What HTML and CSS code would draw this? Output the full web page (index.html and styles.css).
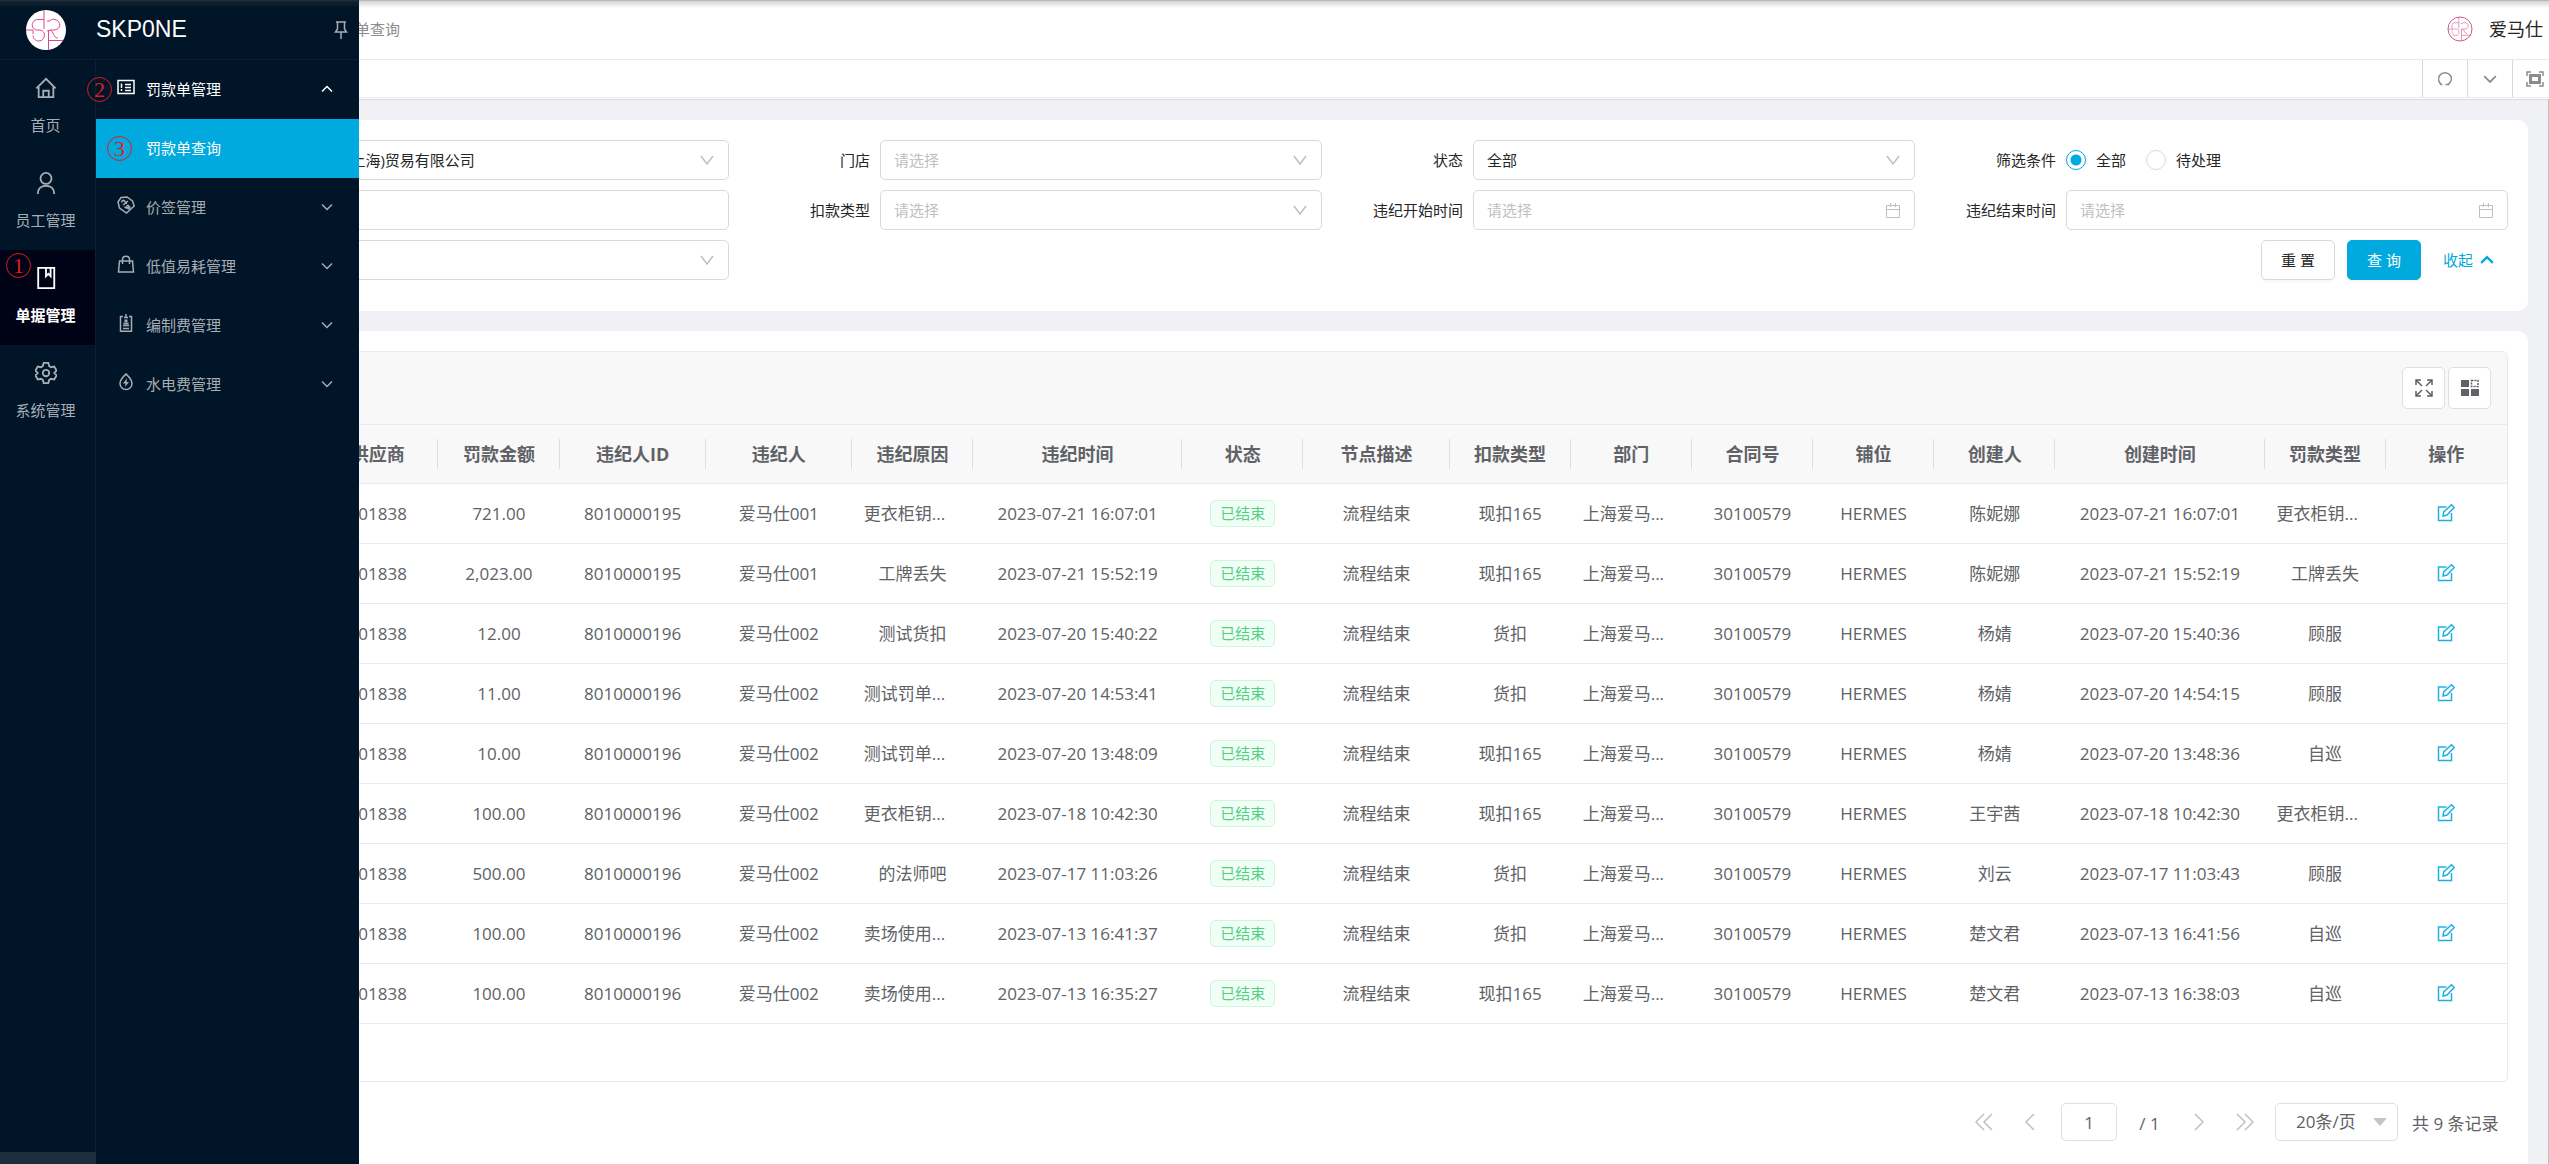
FILE: index.html
```html
<!DOCTYPE html>
<html lang="zh-CN">
  <head>
    <meta charset="UTF-8" />
    <meta name="viewport" content="width=device-width, initial-scale=1.0" />
    <title>罚款单查询</title>
    <link rel="stylesheet" href="styles.css">
  </head>
  <body>
    <!-- 公用图标 -->
    <svg class="sprite" aria-hidden="true">
      <symbol id="logo" viewBox="0 0 40 40">
        <path d="M18 0v19M18 9.500h-6c-7 0-8 10-1 10.500h3c7 1 5 11-1 11-4 0-6-3-6-5.500M0 20h7v4M21 11h3c1-2 3-2 5-1.500 7 1.500 6 10.500-1 10.500h-3l-4 1M22.500 20v20M22.500 30.500H38M24 20c4 1 3 8 8 8" />
      </symbol>
      <symbol id="edit" viewBox="0 0 18 18">
        <path d="M9.500 3H1.500v13.500H14.500V9M6 12l.700-4L14.500.800l2.700 2.700L10 11z" />
      </symbol>
      <symbol id="down" viewBox="0 0 12 12">
        <path d="M1 3.500 6 8.500l5-5" />
      </symbol>
      <symbol id="up" viewBox="0 0 12 12">
        <path d="M1 8.500 6 3.500l5 5" />
      </symbol>
    </svg>

    <!-- 侧边菜单，展开时盖在内容上 -->
    <aside class="sidebar">
      <div class="brand">
        <svg class="brand-logo"><use href="#logo" /></svg>
        <h1 class="brand-name">SKP0NE</h1>
        <button class="pin" type="button" aria-label="固定菜单">
          <svg width="14" height="18" viewBox="0 0 14 18"><path d="M2 1h10M3.500 1v7L1.500 11h11l-2-3V1M7 11v7" /></svg>
        </button>
      </div>
      <div class="menus">
        <nav class="rail">
          <a class="rail-item" href="#">
            <svg viewBox="0 0 24 24"><path d="M1.500 12.500 12 2l10.500 10.500M4 11v11h16V11M9 22v-7h6v7" /></svg>
            <span>首页</span>
          </a>
          <a class="rail-item" href="#">
            <svg viewBox="0 0 24 24"><circle cx="12" cy="7" r="6" /><path d="M3 24c0-5.500 3.500-9 9-9s9 3.500 9 9" /></svg>
            <span>员工管理</span>
          </a>
          <a class="rail-item active" href="#">
            <svg viewBox="0 0 24 24"><path d="M3.500 1h17.500v22H3.500zM12 1.500v8.500l2.500-2.500L17 10V1.500" /></svg>
            <span>单据管理</span>
            <b class="step step-one">1</b>
          </a>
          <a class="rail-item" href="#">
            <svg viewBox="0 0 24 24"><circle cx="12" cy="12" r="3.500" /><path d="M9.500 1h5l1 3.500 2 1.200 3.500-.7 2.500 4.300-2.500 2.700 2.500 2.700-2.500 4.300-3.500-.7-2 1.200-1 3.500h-5l-1-3.500-2-1.200-3.500.7-2.500-4.300L3 12 .5 9.300 3 5l3.500.7 2-1.200z" /></svg>
            <span>系统管理</span>
          </a>
        </nav>
        <nav class="submenu">
          <a class="sub-item open" href="#">
            <b class="step step-two">2</b>
            <svg class="sub-icon" viewBox="0 0 18 18"><path d="M1 2.500h16v13H1zM8 6.500h6M8 9.500h6M8 12.500h6M4.500 5.500V10M4.500 11v2" /></svg>
            <span>罚款单管理</span>
            <svg class="sub-arrow"><use href="#up" /></svg>
          </a>
          <a class="sub-item current" href="#">
            <b class="step step-three">3</b>
            <span>罚款单查询</span>
          </a>
          <a class="sub-item" href="#">
            <svg class="sub-icon" viewBox="0 0 18 18"><path d="M4 1.500 10 1l5.500 4 1.700 5-7.700 7L2.500 12 1 6zM5 6.500c-1-2 2-3 3-1 .5 2 1 2 2 2M6 9l5-4M8 10.500c0 2 4 2 4 0s-3-1-2 1 3 1 3-1" /></svg>
            <span>价签管理</span>
            <svg class="sub-arrow"><use href="#down" /></svg>
          </a>
          <a class="sub-item" href="#">
            <svg class="sub-icon" viewBox="0 0 18 18"><path d="M2.500 6h13l1 11h-15zM5.500 9V4.500c0-4.500 7-4.500 7 0V9" /></svg>
            <span>低值易耗管理</span>
            <svg class="sub-arrow"><use href="#down" /></svg>
          </a>
          <a class="sub-item" href="#">
            <svg class="sub-icon" viewBox="0 0 18 18"><path d="M6 2.500H3.500v14.700h11V2.500H12M7 3.500h4M9 0v4M6 11.500h6M6 14.500h6" /><path class="solid" d="M7.500 5.500h3v2.500h-3zM6.500 8.500h5v2h-5z" /></svg>
            <span>编制费管理</span>
            <svg class="sub-arrow"><use href="#down" /></svg>
          </a>
          <a class="sub-item" href="#">
            <svg class="sub-icon" viewBox="0 0 18 18"><path d="M9 1c3 3 6 5.500 6 9.500a6 6 0 0 1-12 0C3 6.500 6 4 9 1z" /><path class="solid" d="M10 5 6 10.500h2.500L8 14l4-5H9.500z" /></svg>
            <span>水电费管理</span>
            <svg class="sub-arrow"><use href="#down" /></svg>
          </a>
        </nav>
      </div>
      <div class="rail-foot"></div>
    </aside>

    <div class="page">
      <header class="topbar">
        <span class="crumb">罚款单查询</span>
        <svg class="avatar"><circle cx="13" cy="13" r="12" /><use href="#logo" x="1" y="1" width="24" height="24" /></svg>
        <span class="user-name">爱马仕</span>
      </header>
      <div class="tabs">
        <button class="tab-tool" type="button" aria-label="刷新">
          <svg width="14" height="14" viewBox="0 0 14 14"><path d="M4 13C0 10.500-.5 6 2 3s7.500-3 10 0 1.500 7.500-2 9.500M7.500 12.500h3v1" /></svg>
        </button>
        <button class="tab-tool" type="button" aria-label="更多">
          <svg width="14" height="14" viewBox="0 0 12 12"><use href="#down" /></svg>
        </button>
        <button class="tab-tool" type="button" aria-label="全屏">
          <svg width="18" height="16" viewBox="0 0 18 16"><path d="M1 5V1h4M13 1h4v4M17 11v4h-4M5 15H1v-4" /><path class="thick" d="M4.500 4.500h9v7h-9z" /></svg>
        </button>
      </div>

      <main class="content">
        <form class="card filter">
          <div class="field">
            <label for="company"></label>
            <select id="company" aria-label="公司"><option>爱马仕(上海)贸易有限公司</option></select>
          </div>
          <div class="field">
            <label for="store">门店</label>
            <select class="empty" id="store"><option>请选择</option></select>
          </div>
          <div class="field">
            <label for="status">状态</label>
            <select id="status"><option>全部</option></select>
          </div>
          <div class="field">
            <span class="field-label">筛选条件</span>
            <label class="radio"><input type="radio" name="scope" checked />全部</label>
            <label class="radio"><input type="radio" name="scope" />待处理</label>
          </div>
          <div class="field">
            <label for="supplier"></label>
            <input id="supplier" type="text" aria-label="供应商" />
          </div>
          <div class="field">
            <label for="deduct">扣款类型</label>
            <select class="empty" id="deduct"><option>请选择</option></select>
          </div>
          <div class="field">
            <label for="begin">违纪开始时间</label>
            <input class="date" id="begin" type="text" placeholder="请选择" />
          </div>
          <div class="field">
            <label for="end">违纪结束时间</label>
            <input class="date" id="end" type="text" placeholder="请选择" />
          </div>
          <div class="field">
            <label for="kind"></label>
            <select id="kind" aria-label="罚款类型"><option></option></select>
          </div>
          <div class="actions">
            <button class="btn" type="reset">重 置</button>
            <button class="btn primary" type="submit">查 询</button>
            <a class="fold" href="#">收起 <svg><use href="#up" /></svg></a>
          </div>
        </form>

        <section class="card list">
          <div class="grid">
            <div class="toolbar">
              <button class="tool" type="button" aria-label="放大">
                <svg viewBox="0 0 18 18"><path d="M1 6V1h5M1 1l6 6M12 1h5v5M17 1l-6 6M1 12v5h5M1 17l6-6M17 12v5h-5M17 17l-6-6" /></svg>
              </button>
              <button class="tool" type="button" aria-label="列设置">
                <svg viewBox="0 0 18 18"><path class="solid" d="M0 1h8v7H0zM0 10h8v7H0zM10 10h8v7h-8z" /><path class="dash" d="M10.500 1.500h6.500v6h-6.500z" /></svg>
              </button>
            </div>
            <table class="table">
              <colgroup>
                <col class="w-lead" /><col class="w-s" /><col class="w-s" /><col class="w-m" /><col class="w-m" /><col class="w-s" />
                <col class="w-l" /><col class="w-s" /><col class="w-m" /><col class="w-s" /><col class="w-s" /><col class="w-s" />
                <col class="w-s" /><col class="w-s" /><col class="w-l" /><col class="w-s" /><col class="w-s" />
              </colgroup>
              <thead>
                <tr><th></th><th>供应商</th><th>罚款金额</th><th>违纪人ID</th><th>违纪人</th><th>违纪原因</th><th>违纪时间</th><th>状态</th><th>节点描述</th><th>扣款类型</th><th>部门</th><th>合同号</th><th>铺位</th><th>创建人</th><th>创建时间</th><th>罚款类型</th><th>操作</th></tr>
              </thead>
              <tbody>
                <tr><td></td><td>801838</td><td>721.00</td><td>8010000195</td><td>爱马仕001</td><td class="cut">更衣柜钥...</td><td>2023-07-21 16:07:01</td><td><span class="tag">已结束</span></td><td>流程结束</td><td>现扣165</td><td class="cut">上海爱马...</td><td>30100579</td><td>HERMES</td><td>陈妮娜</td><td>2023-07-21 16:07:01</td><td class="cut">更衣柜钥...</td><td><a class="edit" href="#" aria-label="编辑"><svg><use href="#edit" /></svg></a></td></tr>
                <tr><td></td><td>801838</td><td>2,023.00</td><td>8010000195</td><td>爱马仕001</td><td>工牌丢失</td><td>2023-07-21 15:52:19</td><td><span class="tag">已结束</span></td><td>流程结束</td><td>现扣165</td><td class="cut">上海爱马...</td><td>30100579</td><td>HERMES</td><td>陈妮娜</td><td>2023-07-21 15:52:19</td><td>工牌丢失</td><td><a class="edit" href="#" aria-label="编辑"><svg><use href="#edit" /></svg></a></td></tr>
                <tr><td></td><td>801838</td><td>12.00</td><td>8010000196</td><td>爱马仕002</td><td>测试货扣</td><td>2023-07-20 15:40:22</td><td><span class="tag">已结束</span></td><td>流程结束</td><td>货扣</td><td class="cut">上海爱马...</td><td>30100579</td><td>HERMES</td><td>杨婧</td><td>2023-07-20 15:40:36</td><td>顾服</td><td><a class="edit" href="#" aria-label="编辑"><svg><use href="#edit" /></svg></a></td></tr>
                <tr><td></td><td>801838</td><td>11.00</td><td>8010000196</td><td>爱马仕002</td><td class="cut">测试罚单...</td><td>2023-07-20 14:53:41</td><td><span class="tag">已结束</span></td><td>流程结束</td><td>货扣</td><td class="cut">上海爱马...</td><td>30100579</td><td>HERMES</td><td>杨婧</td><td>2023-07-20 14:54:15</td><td>顾服</td><td><a class="edit" href="#" aria-label="编辑"><svg><use href="#edit" /></svg></a></td></tr>
                <tr><td></td><td>801838</td><td>10.00</td><td>8010000196</td><td>爱马仕002</td><td class="cut">测试罚单...</td><td>2023-07-20 13:48:09</td><td><span class="tag">已结束</span></td><td>流程结束</td><td>现扣165</td><td class="cut">上海爱马...</td><td>30100579</td><td>HERMES</td><td>杨婧</td><td>2023-07-20 13:48:36</td><td>自巡</td><td><a class="edit" href="#" aria-label="编辑"><svg><use href="#edit" /></svg></a></td></tr>
                <tr><td></td><td>801838</td><td>100.00</td><td>8010000196</td><td>爱马仕002</td><td class="cut">更衣柜钥...</td><td>2023-07-18 10:42:30</td><td><span class="tag">已结束</span></td><td>流程结束</td><td>现扣165</td><td class="cut">上海爱马...</td><td>30100579</td><td>HERMES</td><td>王宇茜</td><td>2023-07-18 10:42:30</td><td class="cut">更衣柜钥...</td><td><a class="edit" href="#" aria-label="编辑"><svg><use href="#edit" /></svg></a></td></tr>
                <tr><td></td><td>801838</td><td>500.00</td><td>8010000196</td><td>爱马仕002</td><td>的法师吧</td><td>2023-07-17 11:03:26</td><td><span class="tag">已结束</span></td><td>流程结束</td><td>货扣</td><td class="cut">上海爱马...</td><td>30100579</td><td>HERMES</td><td>刘云</td><td>2023-07-17 11:03:43</td><td>顾服</td><td><a class="edit" href="#" aria-label="编辑"><svg><use href="#edit" /></svg></a></td></tr>
                <tr><td></td><td>801838</td><td>100.00</td><td>8010000196</td><td>爱马仕002</td><td class="cut">卖场使用...</td><td>2023-07-13 16:41:37</td><td><span class="tag">已结束</span></td><td>流程结束</td><td>货扣</td><td class="cut">上海爱马...</td><td>30100579</td><td>HERMES</td><td>楚文君</td><td>2023-07-13 16:41:56</td><td>自巡</td><td><a class="edit" href="#" aria-label="编辑"><svg><use href="#edit" /></svg></a></td></tr>
                <tr><td></td><td>801838</td><td>100.00</td><td>8010000196</td><td>爱马仕002</td><td class="cut">卖场使用...</td><td>2023-07-13 16:35:27</td><td><span class="tag">已结束</span></td><td>流程结束</td><td>现扣165</td><td class="cut">上海爱马...</td><td>30100579</td><td>HERMES</td><td>楚文君</td><td>2023-07-13 16:38:03</td><td>自巡</td><td><a class="edit" href="#" aria-label="编辑"><svg><use href="#edit" /></svg></a></td></tr>
              </tbody>
            </table>
          </div>
          <div class="pager">
            <button class="turn" type="button" aria-label="首页"><svg viewBox="0 0 18 18"><path d="M9 1 1 9l8 8M17 1 9 9l8 8" /></svg></button>
            <button class="turn" type="button" aria-label="上一页"><svg viewBox="0 0 18 18"><path d="M13 1 5 9l8 8" /></svg></button>
            <input class="page-no" type="text" value="1" aria-label="页码" />
            <span class="page-all">/ 1</span>
            <button class="turn" type="button" aria-label="下一页"><svg viewBox="0 0 18 18"><path d="m5 1 8 8-8 8" /></svg></button>
            <button class="turn" type="button" aria-label="末页"><svg viewBox="0 0 18 18"><path d="m1 1 8 8-8 8M9 1l8 8-8 8" /></svg></button>
            <select class="page-size" aria-label="每页条数"><option>20条/页</option></select>
            <span class="total">共 9 条记录</span>
          </div>
        </section>
      </main>
    </div>
  </body>
</html>
```

FILE: styles.css
```css
* {
  margin: 0;
  padding: 0;
  box-sizing: border-box;
}
body {
  height: 100vh;
  overflow: hidden;
  font: 15px/20px "Open Sans", "Noto Sans CJK SC", sans-serif;
  color: #262626;
  background: #fff;
}
/* 窗口顶部的阴影 */
body::after {
  content: "";
  position: fixed;
  top: 0;
  left: 0;
  right: 0;
  height: 7px;
  border-top: 1px solid rgba(80, 80, 80, 0.4);
  background: linear-gradient(rgba(80, 80, 80, 0.25), rgba(80, 80, 80, 0));
  z-index: 20;
}
a {
  color: inherit;
  text-decoration: none;
}
button,
input,
select {
  font: inherit;
  color: inherit;
}
button {
  border: 0;
  background: none;
}
svg {
  flex: none;
  fill: none;
  stroke: currentColor;
}
.sprite {
  display: none;
}
.solid {
  fill: currentColor;
  stroke: none;
}

/* 侧边菜单 */
.sidebar {
  position: fixed;
  top: 0;
  left: 0;
  bottom: 0;
  width: 359px;
  display: flex;
  flex-direction: column;
  background: #001528;
  color: #a6adb4;
  z-index: 10;
}
.brand {
  height: 60px;
  display: flex;
  align-items: center;
  padding: 0 11px 0 26px;
  border-bottom: 1px solid #0b2033;
}
.brand-logo {
  width: 40px;
  height: 40px;
  border-radius: 50%;
  background: #fff;
  color: #e0468a;
}
.brand-name {
  flex: 1;
  margin-left: 30px;
  padding-bottom: 2px;
  font: 23px/30px "Liberation Sans", Arial, sans-serif;
  color: #fff;
}
.pin {
  display: flex;
  color: #a6adb4;
}
.pin svg {
  stroke-width: 1.5;
}
.menus {
  flex: 1;
  display: flex;
}
.rail {
  width: 96px;
  border-right: 1px solid #0b2033;
}
.rail-item {
  position: relative;
  height: 95px;
  padding: 17px 4px 0 0;
  display: flex;
  flex-direction: column;
  align-items: center;
  gap: 16px;
}
.rail-item svg {
  width: 22px;
  height: 22px;
  stroke-width: 2;
}
.rail-item.active {
  background: #000316;
  color: #fff;
  font-weight: bold;
}
.submenu {
  flex: 1;
}
.sub-item {
  position: relative;
  height: 59px;
  padding: 0 26px 2px 21px;
  display: flex;
  align-items: center;
  gap: 11px;
}
.sub-item span {
  flex: 1;
}
.sub-icon {
  width: 18px;
  height: 18px;
  margin-bottom: 4px;
  stroke-width: 1.5;
}
.sub-arrow {
  width: 12px;
  height: 12px;
  stroke-width: 1.5;
}
.sub-item.open {
  color: #fff;
}
.sub-item.current {
  padding-left: 50px;
  background: #00aade;
  color: #fff;
}
.rail-foot {
  width: 96px;
  height: 12px;
  background: #1c2d3d;
}

/* 步骤序号 */
.step {
  position: absolute;
  width: 25px;
  height: 25px;
  border: 1px solid #e01b22;
  border-radius: 50%;
  font: 22px/23px "Liberation Serif", serif;
  text-align: center;
  color: #e01b22;
}
.step-one {
  left: 6px;
  top: 3px;
}
.step-two {
  left: -9px;
  top: 17px;
}
.step-three {
  left: 11px;
  top: 17px;
}

/* 顶部 */
.page {
  height: 100%;
  padding-left: 96px;
  display: flex;
  flex-direction: column;
}
.topbar {
  height: 60px;
  padding: 0 6px 1px 229px;
  display: flex;
  align-items: center;
  border-bottom: 1px solid #ebebeb;
}
.crumb {
  flex: 1;
  color: #8c8c8c;
}
.avatar {
  width: 26px;
  height: 26px;
  margin-right: 16px;
  color: #cf5a8d;
}
.user-name {
  font-size: 18px;
}
.tabs {
  height: 38px;
  margin-right: -8px;
  display: flex;
  justify-content: flex-end;
  border-bottom: 1px solid #ebebeb;
}
.tab-tool {
  width: 45px;
  height: 37px;
  display: flex;
  align-items: center;
  justify-content: center;
  border-left: 1px solid #d9d9d9;
  color: #8c8c8c;
}
.tab-tool svg {
  stroke-width: 1.5;
}
.tab-tool .thick {
  stroke-width: 3;
}

/* 内容区 */
.content {
  flex: 1;
  margin-top: 1px;
  padding: 20px 20px 0;
  display: flex;
  flex-direction: column;
  gap: 20px;
  background: #f0f1f5;
  border-top: 1px solid #d9d9d9;
  border-right: 1px solid #c0c0c4;
}
.card {
  padding: 20px;
  border-radius: 10px;
  background: #fff;
}
.filter {
  display: grid;
  grid-template-columns: repeat(4, 1fr);
  row-gap: 10px;
  padding-bottom: 31px;
}
.field {
  height: 40px;
  display: flex;
  align-items: center;
}
.field > label:first-child,
.field-label {
  flex: 0 0 151px;
  padding-right: 10px;
  text-align: right;
}
.field > select,
.field > input {
  flex: 1;
  min-width: 0;
  height: 40px;
  padding: 0 40px 0 13px;
  border: 1px solid #d9d9d9;
  border-radius: 5px;
  background: #fff;
}
.field > select {
  appearance: none;
  background: #fff url("data:image/svg+xml,%3Csvg xmlns='http://www.w3.org/2000/svg' width='14' height='14' fill='none' stroke='%23bfbfbf' stroke-width='1.500'%3E%3Cpath d='M1 3l6 8 6-8'/%3E%3C/svg%3E") no-repeat right 14px center;
}
.field > select.empty,
.field > input::placeholder {
  color: #bfbfbf;
}
.field > .date {
  background: #fff url("data:image/svg+xml,%3Csvg xmlns='http://www.w3.org/2000/svg' width='14' height='15' fill='none' stroke='%23bfbfbf'%3E%3Cpath d='M.500 2.500h13v12H.500zM.500 6.500h13M4.500 0v4M9.500 0v4'/%3E%3C/svg%3E") no-repeat right 14px center;
}
.radio {
  display: flex;
  align-items: center;
  gap: 10px;
  margin-right: 20px;
}
.radio input {
  appearance: none;
  width: 20px;
  height: 20px;
  border: 1px solid #d9d9d9;
  border-radius: 50%;
}
.radio input:checked {
  border-color: #00aade;
  background: radial-gradient(#00aade 5px, #fff 6px);
}
.actions {
  grid-column: 4;
  display: flex;
  align-items: center;
  justify-content: flex-end;
  gap: 12px;
  padding-right: 14px;
}
.btn {
  width: 74px;
  height: 40px;
  border: 1px solid #d9d9d9;
  border-radius: 5px;
  box-shadow: 0 2px 2px rgba(0, 0, 0, 0.03);
}
.btn.primary {
  border-color: #00aade;
  background: #00aade;
  color: #fff;
}
.fold {
  display: flex;
  align-items: center;
  gap: 7px;
  margin-left: 10px;
  color: #00aade;
}
.fold svg {
  width: 14px;
  height: 14px;
  stroke-width: 2;
}

/* 列表 */
.list {
  flex: 1;
  border-radius: 10px 10px 0 0;
}
.grid {
  padding-bottom: 57px;
  border: 1px solid #e8eaec;
  border-radius: 5px;
  overflow: hidden;
}
.toolbar {
  height: 72px;
  padding: 0 16px;
  display: flex;
  align-items: center;
  justify-content: flex-end;
  gap: 3px;
  background: #f8f8f9;
}
.tool {
  width: 43px;
  height: 42px;
  display: flex;
  align-items: center;
  justify-content: center;
  border: 1px solid #dcdfe6;
  border-radius: 5px;
  background: #fff;
  color: #606266;
}
.tool svg {
  width: 18px;
  height: 18px;
  stroke-width: 1.5;
}
.tool .dash {
  stroke-dasharray: 2 1;
}
.table {
  width: 100%;
  table-layout: fixed;
  border-collapse: collapse;
  font-size: 17px;
  color: #606266;
  text-align: center;
  white-space: nowrap;
}
.w-lead {
  width: 180px;
}
.w-s {
  width: 121px;
}
.w-m {
  width: 146px;
}
.w-l {
  width: 209px;
}
.table th {
  height: 59px;
  border-top: 1px solid #e8eaec;
  border-bottom: 1px solid #e8eaec;
  font-size: 18px;
  background: #f8f8f9 linear-gradient(#dcdfe2, #dcdfe2) no-repeat right center / 1px 30px;
}
.table th:last-child {
  background: #f8f8f9;
}
.table td {
  height: 60px;
  border-bottom: 1px solid #e8eaec;
}
.table .cut {
  padding-left: 12px;
  text-align: left;
}
.tag {
  display: inline-block;
  padding: 2px 9px;
  border: 1px solid #d0f5df;
  border-radius: 5px;
  background: #effff5;
  font-size: 15px;
  line-height: 21px;
  color: #52cf82;
}
.edit {
  display: inline-flex;
  padding-bottom: 2px;
  vertical-align: middle;
  color: #1fb1e0;
}
.edit svg {
  width: 18px;
  height: 18px;
  stroke-width: 1.5;
}

/* 分页 */
.pager {
  padding: 21px 6px 0 0;
  display: flex;
  align-items: center;
  justify-content: flex-end;
  font-size: 17px;
  color: #606266;
}
.turn {
  width: 46px;
  height: 38px;
  display: flex;
  align-items: center;
  justify-content: center;
  color: #c0c0c4;
}
.turn svg {
  width: 18px;
  height: 18px;
  stroke-width: 1.5;
}
.page-no {
  width: 56px;
  height: 38px;
  margin-left: 8px;
  border: 1px solid #dcdfe6;
  border-radius: 5px;
  text-align: center;
}
.page-all {
  width: 59px;
  padding: 4px 0 0 6px;
  text-align: center;
}
.page-size {
  width: 123px;
  height: 38px;
  margin: 0 14px 0 7px;
  padding-left: 20px;
  appearance: none;
  border: 1px solid #dcdfe6;
  border-radius: 5px;
  background: #fff url("data:image/svg+xml,%3Csvg xmlns='http://www.w3.org/2000/svg' width='14' height='8' fill='%23c0c4cc'%3E%3Cpath d='M0 0h14L7 8z'/%3E%3C/svg%3E") no-repeat right 10px center;
}
.total {
  min-width: 90px;
  padding-top: 4px;
}
```
